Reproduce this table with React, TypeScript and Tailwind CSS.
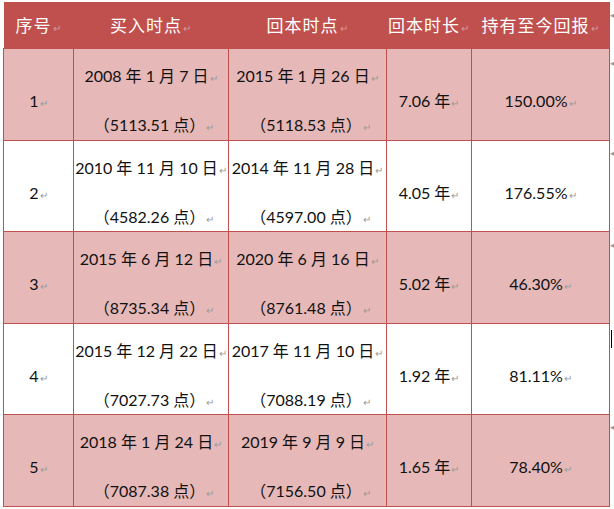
const rows = [
  { n: "1", buy: "2008 年 1 月 7 日", buyP: "（5113.51 点）", back: "2015 年 1 月 26 日", backP: "（5118.53 点）", dur: "7.06 年", ret: "150.00%", pink: true, h: "h-[92px]" },
  { n: "2", buy: "2010 年 11 月 10 日", buyP: "（4582.26 点）", back: "2014 年 11 月 28 日", backP: "（4597.00 点）", dur: "4.05 年", ret: "176.55%", pink: false, h: "h-[91px]" },
  { n: "3", buy: "2015 年 6 月 12 日", buyP: "（8735.34 点）", back: "2020 年 6 月 16 日", backP: "（8761.48 点）", dur: "5.02 年", ret: "46.30%", pink: true, h: "h-[92px]" },
  { n: "4", buy: "2015 年 12 月 22 日", buyP: "（7027.73 点）", back: "2017 年 11 月 10 日", backP: "（7088.19 点）", dur: "1.92 年", ret: "81.11%", pink: false, h: "h-[91px]" },
  { n: "5", buy: "2018 年 1 月 24 日", buyP: "（7087.38 点）", back: "2019 年 9 月 9 日", backP: "（7156.50 点）", dur: "1.65 年", ret: "78.40%", pink: true, h: "h-[92px]" },
];

const headers = ["序号", "买入时点", "回本时点", "回本时长", "持有至今回报"];

function Mark({ light }: { light?: boolean }) {
  return (
    <span className={`text-[10px] ml-[1px] ${light ? "text-[#d99a98]" : "text-[#9a9a9a]"}`}>↵</span>
  );
}

function TwoLine({ top, bottom }: { top: string; bottom: string }) {
  return (
    <div className="pt-[17px] leading-[20px] text-center whitespace-nowrap">
      <div>
        {top}
        <Mark />
      </div>
      <div className="mt-[27px] pl-[6px]">
        {bottom}
        <Mark />
      </div>
    </div>
  );
}

function OneLine({ text }: { text: string }) {
  return (
    <div className="pt-[42px] leading-[20px] text-center whitespace-nowrap">
      {text}
      <Mark />
    </div>
  );
}

export default function App() {
  return (
    <div className="relative w-[614px] h-[509px] bg-white pt-[2px] pl-[3px]">
      <table
        className="table-fixed border-collapse text-[16px] text-[#111]"
        style={{ fontFamily: "Lato, 'Noto Sans CJK SC', sans-serif" }}
      >
        <colgroup>
          <col className="w-[70px]" />
          <col className="w-[155px]" />
          <col className="w-[158px]" />
          <col className="w-[85px]" />
          <col className="w-[138px]" />
        </colgroup>
        <thead>
          <tr className="h-[46px] bg-[#c0504d]">
            {headers.map((h) => (
              <th
                key={h}
                className="p-0 pt-[4px] align-middle text-center font-normal text-white text-[17px] leading-[20px] tracking-[1px] whitespace-nowrap"
                style={{ fontFamily: "'Noto Sans CJK SC', sans-serif" }}
              >
                {h}
                <Mark light />
              </th>
            ))}
          </tr>
        </thead>
        <tbody>
          {rows.map((r) => (
            <tr key={r.n} className={`${r.h} ${r.pink ? "bg-[#e6b8b7]" : "bg-white"}`}>
              <td className="p-0 align-top border border-[#c0504d]">
                <OneLine text={r.n} />
              </td>
              <td className="p-0 align-top border border-[#c0504d]">
                <TwoLine top={r.buy} bottom={r.buyP} />
              </td>
              <td className="p-0 align-top border border-[#c0504d]">
                <TwoLine top={r.back} bottom={r.backP} />
              </td>
              <td className="p-0 align-top border border-[#c0504d]">
                <OneLine text={r.dur} />
              </td>
              <td className="p-0 align-top border border-[#c0504d]">
                <OneLine text={r.ret} />
              </td>
            </tr>
          ))}
        </tbody>
      </table>

      {/* end-of-row marks outside the table */}
      <span className="absolute left-[610px] top-[8px] text-[9px] text-[#9a9a9a]">◂</span>
      <span className="absolute left-[610px] top-[56px] text-[9px] text-[#9a9a9a]">◂</span>
      <span className="absolute left-[610px] top-[146px] text-[9px] text-[#9a9a9a]">◂</span>
      <span className="absolute left-[610px] top-[238px] text-[9px] text-[#9a9a9a]">◂</span>
      <span className="absolute left-[611px] top-[330px] w-[1px] h-[18px] bg-black" />
      <span className="absolute left-[610px] top-[420px] text-[9px] text-[#9a9a9a]">◂</span>
    </div>
  );
}
